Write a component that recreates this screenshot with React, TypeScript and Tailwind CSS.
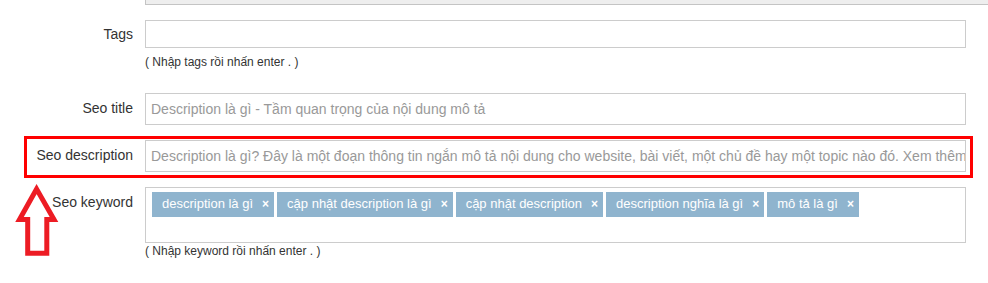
import React from 'react'

const keywords = [
  'description là gì',
  'cập nhật description là gì',
  'cập nhật description',
  'description nghĩa là gì',
  'mô tả là gì',
]

function Label({ text, className = '' }: { text: string; className?: string }) {
  return (
    <div className={`w-[145px] shrink-0 pr-[12px] text-right text-[14px] text-[#333] ${className}`}>
      {text}
    </div>
  )
}

export default function App() {
  return (
    <div
      className="relative w-[988px] h-[283px] overflow-hidden bg-white"
      style={{ fontFamily: '"Liberation Sans", Arial, sans-serif' }}
    >
      {/* disabled field cut off at the top */}
      <div className="ml-[145px] h-[5px] bg-[#eeeeee] border-l border-b border-[#c4c4c4]" />

      {/* Tags */}
      <div className="flex mt-[15px]">
        <Label text="Tags" className="leading-[28px]" />
        <div className="w-[821px] h-[28px] border border-[#cccccc] bg-white" />
      </div>
      <p className="ml-[145px] mt-[6px] text-[12px] leading-[16px] text-[#333]">( Nhập tags rồi nhấn enter . )</p>

      {/* Seo title */}
      <div className="flex mt-[23px]">
        <Label text="Seo title" className="leading-[30px]" />
        <input
          className="w-[821px] h-[32px] border border-[#cccccc] pl-[5px] pb-[1px] text-[14px] outline-none placeholder:text-[#999]"
          placeholder="Description là gì - Tầm quan trọng của nội dung mô tả"
        />
      </div>

      {/* Seo description */}
      <div className="flex mt-[15px]">
        <Label text="Seo description" className="leading-[30px]" />
        <input
          className="w-[821px] h-[32px] border border-[#cccccc] pl-[5px] pb-[1px] text-[14px] outline-none placeholder:text-[#999]"
          placeholder="Description là gì? Đây là một đoạn thông tin ngắn mô tả nội dung cho website, bài viết, một chủ đề hay một topic nào đó. Xem thêm"
        />
      </div>

      {/* Seo keyword */}
      <div className="flex mt-[15px]">
        <Label text="Seo keyword" className="leading-[30px]" />
        <div className="w-[821px] h-[56px] border border-[#cccccc] pl-[6px] pt-[4px]">
          <div className="flex gap-[3px]">
            {keywords.map((k) => (
              <span
                key={k}
                className="flex items-center h-[25px] bg-[#8fb4ce] pl-[10px] pr-[5px] pb-[1px] text-[13px] text-white"
              >
                {k}
                <span className="ml-[9px] text-[12px] font-bold">×</span>
              </span>
            ))}
          </div>
        </div>
      </div>
      <p className="ml-[145px] text-[12px] leading-[16px] text-[#333]">( Nhập keyword rồi nhấn enter . )</p>

      {/* annotation */}
      <div className="absolute left-[24px] top-[136px] w-[949px] h-[42px] border-[3px] border-[#ff0000]" />
      <svg
        className="absolute left-[10px] top-[178px]"
        width="54"
        height="82"
        viewBox="10 178 54 82"
      >
        <polygon
          points="36.6,189 19.5,219.5 27.7,219.5 27.7,253.2 46.8,253.2 46.8,219.5 54,219.5"
          fill="none"
          stroke="#ed1c24"
          strokeWidth="5"
          strokeLinejoin="miter"
        />
      </svg>
    </div>
  )
}
